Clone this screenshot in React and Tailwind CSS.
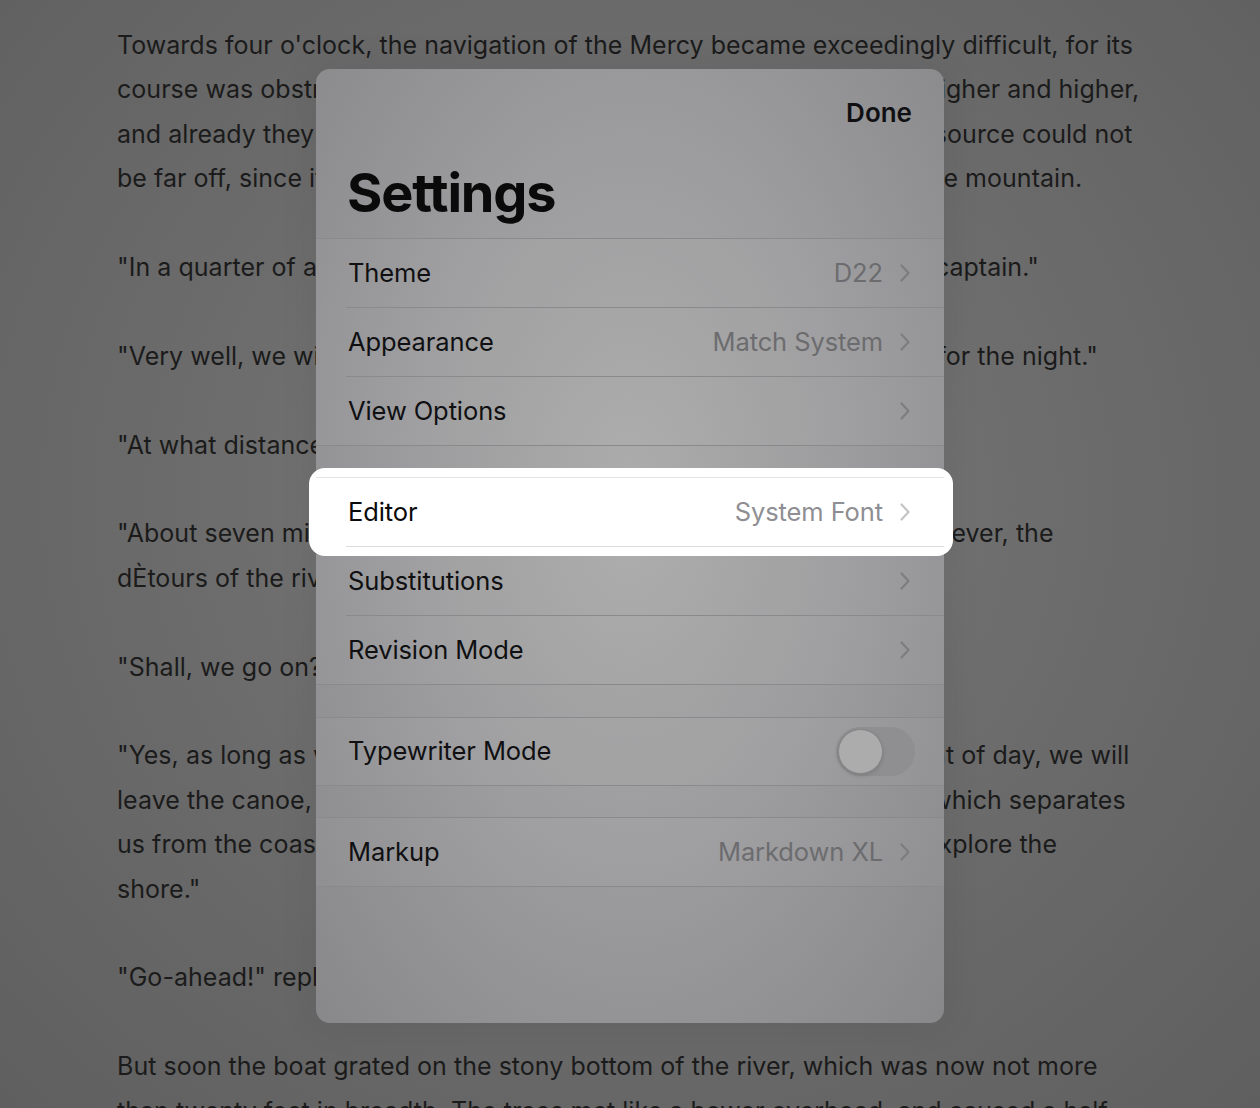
import React from "react";

const paragraphs = [
  [
    "Towards four o'clock, the navigation of the Mercy became exceedingly difficult, for its",
    "course was obstructed by aquatic plants and rocks. The banks rose higher and higher,",
    "and already they were approaching the spurs of Mount Franklin. The source could not",
    "be far off, since it was fed by the water from the southern slopes of the mountain.",
  ],
  ["\"In a quarter of an hour,\" said the sailor, \"we shall be obliged to stop, captain.\""],
  ["\"Very well, we will stop, Pencroft, and we will make our encampment for the night.\""],
  ["\"At what distance are we from Granite House?\" asked Harding."],
  [
    "\"About seven miles,\" replied the engineer, \"taking into calculation, however, the",
    "dÈtours of the river, which has carried us to the north-west.\"",
  ],
  ["\"Shall, we go on?\" asked the reporter."],
  [
    "\"Yes, as long as we can go forward,\" replied the engineer. \"At first light of day, we will",
    "leave the canoe, and in two hours I hope we shall cross the distance which separates",
    "us from the coast, and then we shall have the whole day in which to explore the",
    "shore.\"",
  ],
  ["\"Go-ahead!\" replied Pencroft."],
  [
    "But soon the boat grated on the stony bottom of the river, which was now not more",
    "than twenty feet in breadth. The trees met like a bower overhead, and caused a half",
  ],
];

function Chevron({ light }) {
  return (
    <svg width="12" height="20" viewBox="0 0 12 20" className="shrink-0">
      <path
        d="M2.5 2.5 L9.5 10 L2.5 17.5"
        fill="none"
        stroke={light ? "#c4c4c7" : "#7d7d80"}
        strokeWidth="2.2"
        strokeLinecap="round"
        strokeLinejoin="round"
      />
    </svg>
  );
}

function Row({ label, value, inset = true, last = false, light = false, chevron = true }) {
  return (
    <div className="flex h-[69px] flex-col">
      <div className="flex h-[68px] items-center pl-[32px] pr-[33px]">
        <span className={`text-[25.5px] tracking-[-0.1px] ${light ? "text-[#0a0a0a]" : "text-[#101012]"}`}>{label}</span>
        <div className="ml-auto flex items-center gap-[16px]">
          {value && (
            <span className={`text-[25.5px] tracking-[-0.1px] ${light ? "text-[#8e8e93]" : "text-[#6c6c6f]"}`}>{value}</span>
          )}
          {chevron && <Chevron light={light} />}
        </div>
      </div>
      <div
        className={`h-px ${inset && !last ? "ml-[30px]" : ""} ${light ? "bg-[#dcdce0]" : "bg-[#8a8a8d]"}`}
      />
    </div>
  );
}

export default function App() {
  return (
    <div
      className="relative h-[1108px] w-full overflow-hidden bg-[radial-gradient(ellipse_at_50%_45%,#7b7b7b_0%,#6d6d6d_45%,#5f5f5f_100%)]"
      style={{ fontFamily: "Inter, 'Noto Sans', sans-serif" }}
    >
      {/* background document */}
      <div className="flex flex-col gap-[44.4px] pl-[117px] pt-[23px] text-[25px] leading-[44.4px] tracking-[0.03px] text-[#1b1b1b]">
        {paragraphs.map((p, i) => (
          <div key={i}>
            {p.map((line, j) => (
              <div key={j} className="whitespace-nowrap">
                {line}
              </div>
            ))}
          </div>
        ))}
      </div>

      {/* settings sheet */}
      <div className="absolute left-[316px] top-[69px] flex h-[954px] w-[628px] flex-col rounded-[14px] bg-[radial-gradient(ellipse_at_50%_45%,#acacac_0%,#9c9c9e_50%,#88888a_100%)] shadow-[0_0_40px_rgba(0,0,0,0.08)]">
        {/* header */}
        <div className="flex h-[170px] flex-col border-b border-[#8a8a8d]">
          <div className="self-end pr-[32px] pt-[28px] text-[26px] font-semibold leading-[32px] text-[#101012]">
            Done
          </div>
          <div className="mt-auto pb-[15px] pl-[31px] text-[54px] font-bold leading-[60px] tracking-[-1.2px] text-[#0a0a0a]">
            Settings
          </div>
        </div>

        {/* group 1 */}
        <div className="bg-white/[0.03]">
          <Row label="Theme" value="D22" />
          <Row label="Appearance" value="Match System" />
          <Row label="View Options" last />
        </div>

        <div className="h-[31px]" />

        {/* group 2 */}
        <div className="border-t border-[#8a8a8d] bg-white/[0.03]">
          <div className="relative">
            <div className="absolute -bottom-[9px] -left-[7px] -right-[9px] -top-[10px] rounded-[16px] bg-white" />
            <div className="relative">
              <div className="absolute -top-px left-0 right-0 h-px bg-[#e4e4e8]" />
              <Row label="Editor" value="System Font" light />
            </div>
          </div>
          <Row label="Substitutions" />
          <Row label="Revision Mode" last />
        </div>

        <div className="h-[32px]" />

        {/* group 3 */}
        <div className="border-t border-[#8a8a8d] bg-white/[0.03]">
          <div className="flex h-[68px] items-center border-b border-[#8a8a8d] pl-[32px] pr-[29px]">
            <span className="text-[25.5px] tracking-[-0.1px] text-[#101012]">Typewriter Mode</span>
            <div className="ml-auto flex h-[49px] w-[79px] items-center rounded-full bg-[#8f8f91] pl-[2px]">
              <div className="h-[45px] w-[45px] rounded-full border-[1.5px] border-[#858587] bg-[#acacac] shadow-[0_2px_4px_rgba(0,0,0,0.12)]" />
            </div>
          </div>
        </div>

        <div className="h-[31px]" />

        {/* group 4 */}
        <div className="border-t border-[#8a8a8d] bg-white/[0.03]">
          <Row label="Markup" value="Markdown XL" last />
        </div>
      </div>
    </div>
  );
}
